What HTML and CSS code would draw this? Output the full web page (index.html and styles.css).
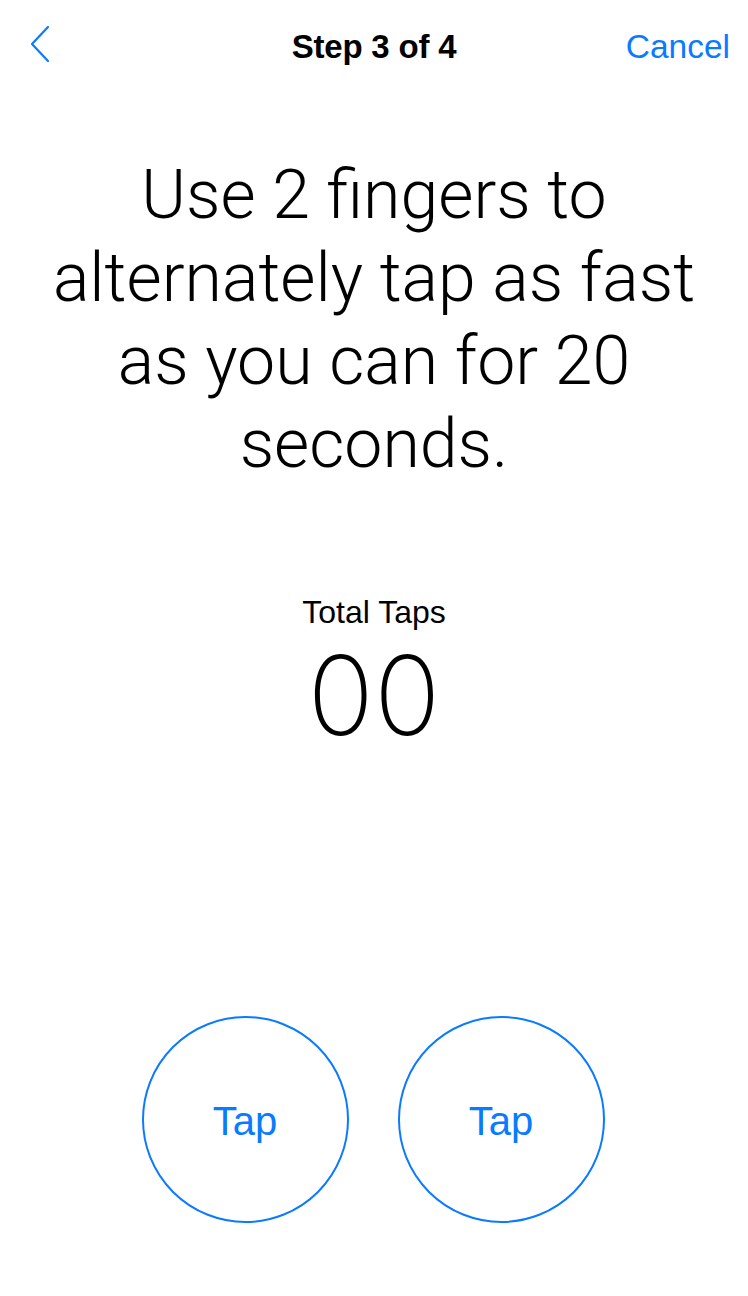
FILE: index.html
```html
<!DOCTYPE html>
<html lang="en">
<head>
<meta charset="utf-8">
<title>Step 3 of 4</title>
<link rel="stylesheet" href="styles.css">
</head>
<body>
<div class="screen">
  <header class="nav">
    <div class="nav-left">
      <svg class="back" width="22" height="38" viewBox="0 0 22 38" aria-hidden="true">
        <polyline points="18,2 2,19 18,36" fill="none" stroke="#0a7aff" stroke-width="2.2" stroke-linecap="round" stroke-linejoin="round"/>
      </svg>
    </div>
    <div class="nav-title">Step 3 of 4</div>
    <div class="nav-right"><span class="cancel">Cancel</span></div>
  </header>

  <h1 class="instruction">Use 2 fingers to<br>alternately tap as fast<br>as you can for 20<br>seconds.</h1>

  <section class="counter">
    <div class="counter-label">Total Taps</div>
    <div class="counter-value">00</div>
  </section>

  <section class="buttons">
    <div class="tap-btn">Tap</div>
    <div class="tap-btn">Tap</div>
  </section>
</div>
</body>
</html>
```

FILE: styles.css
```css
html, body {
  margin: 0;
  padding: 0;
  background: #ffffff;
}

body {
  font-family: "Liberation Sans", Arial, sans-serif;
  color: #000000;
}

.screen {
  width: 748px;
  height: 1296px;
  display: flex;
  flex-direction: column;
}

.nav {
  height: 92px;
  display: grid;
  grid-template-columns: 1fr auto 1fr;
  align-items: center;
  padding: 0 18px;
}

.nav-left {
  display: flex;
  align-items: center;
  padding-left: 12px;
}

.back {
  display: block;
  margin-bottom: 4px;
}

.nav-title {
  font-size: 33px;
  font-weight: 700;
  padding-top: 2px;
  letter-spacing: -0.2px;
}

.nav-right {
  display: flex;
  justify-content: flex-end;
  padding-top: 2px;
}

.cancel {
  color: #0a7aff;
  font-size: 33.5px;
}

.instruction {
  margin: 62px 0 0;
  font-family: Roboto, "Liberation Sans", sans-serif;
  font-size: 68px;
  font-weight: 300;
  line-height: 83px;
  text-align: center;
  white-space: nowrap;
}

.counter {
  margin-top: 108px;
  display: flex;
  flex-direction: column;
  align-items: center;
}

.counter-label {
  font-size: 32px;
  line-height: 36px;
}

.counter-value {
  margin-top: 9px;
  font-family: Inter, "Liberation Sans", sans-serif;
  font-weight: 200;
  font-size: 110px;
  line-height: 112px;
}

.buttons {
  margin-top: 265px;
  padding-right: 2px;
  display: flex;
  justify-content: center;
  gap: 49px;
}

.tap-btn {
  box-sizing: border-box;
  width: 207px;
  height: 207px;
  border: 2px solid #0a7aff;
  border-radius: 50%;
  display: flex;
  align-items: center;
  justify-content: center;
  color: #0a7aff;
  font-size: 40px;
  padding-top: 4px;
}
```
